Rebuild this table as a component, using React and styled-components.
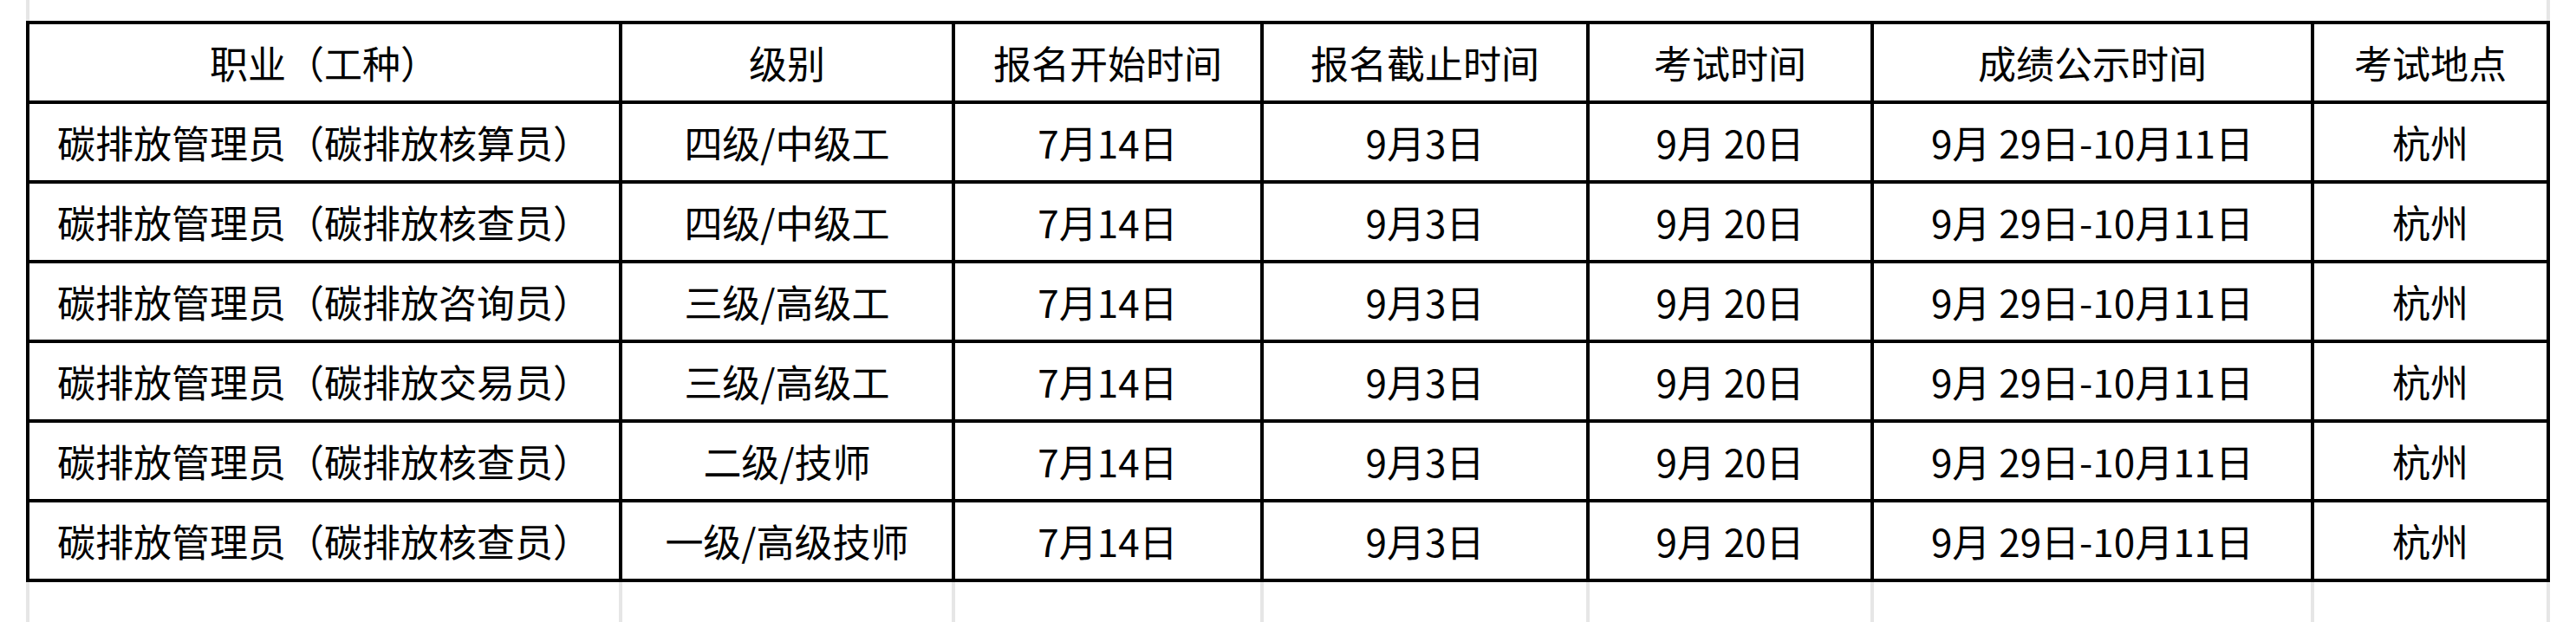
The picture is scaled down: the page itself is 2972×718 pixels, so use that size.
import React from 'react';
import styled, {createGlobalStyle} from 'styled-components';

const GlobalStyle = createGlobalStyle`
  html, body {
    margin: 0;
    padding: 0;
    background: #fff;
  }
  body {
    font-family: "Noto Sans CJK SC", "Noto Sans", sans-serif;
    color: #000;
  }
`

const COLUMNS = '680px 380px 352px 372px 324px 504px 268px'

const headers = ['职业（工种）', '级别', '报名开始时间', '报名截止时间', '考试时间', '成绩公示时间', '考试地点']

const rows = [
  ['碳排放管理员（碳排放核算员）', '四级/中级工'],
  ['碳排放管理员（碳排放核查员）', '四级/中级工'],
  ['碳排放管理员（碳排放咨询员）', '三级/高级工'],
  ['碳排放管理员（碳排放交易员）', '三级/高级工'],
  ['碳排放管理员（碳排放核查员）', '二级/技师'],
  ['碳排放管理员（碳排放核查员）', '一级/高级技师'],
]

const fixed = ['7月14日', '9月3日', '9月 20日', '9月 29日-10月11日', '杭州']

export default function App() {
  return (
    <>
      <GlobalStyle />
      <Page>
        <TopStrip />
        <Grid>
          {headers.map((h) => (
            <Cell key={h}>{h}</Cell>
          ))}
          {rows.map((r, i) =>
            [...r, ...fixed].map((v, j) => <Cell key={`${i}-${j}`}>{v}</Cell>)
          )}
        </Grid>
        <BottomStrip>
          {headers.map((h) => (
            <Blank key={h} />
          ))}
        </BottomStrip>
      </Page>
    </>
  );
}

const Page = styled.div`
  width: 2912px;
  padding: 0 30px;
  display: flex;
  flex-direction: column;
  height: 718px;
  overflow: hidden;
`

const TopStrip = styled.div`
  height: 24px;
  border-left: 4px solid #e6e6e6;
  border-right: 4px solid #e6e6e6;
`

const Grid = styled.div`
  display: grid;
  grid-template-columns: ${COLUMNS};
  grid-auto-rows: 88px;
  gap: 4px;
  padding: 4px;
  background: #000;
`

const Cell = styled.div`
  background: #fff;
  display: flex;
  align-items: center;
  justify-content: center;
  font-size: 44px;
  line-height: 1;
  white-space: nowrap;
`

const BottomStrip = styled.div`
  flex: 1;
  display: grid;
  grid-template-columns: ${COLUMNS};
  gap: 4px;
  padding: 0 4px;
  background: #e6e6e6;
`

const Blank = styled.div`
  background: #fff;
`
